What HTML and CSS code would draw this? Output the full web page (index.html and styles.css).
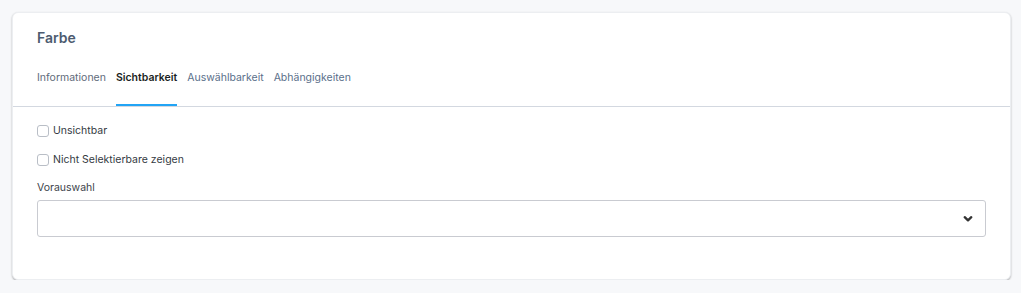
FILE: index.html
```html
<!DOCTYPE html>
<html lang="de">
<head>
<meta charset="utf-8">
<link rel="stylesheet" href="styles.css">
</head>
<body>
<div class="card">
  <div class="card-head">
    <h2 class="title">Farbe</h2>
  </div>
  <nav class="tabs">
    <span class="tab">Informationen</span>
    <span class="tab active">Sichtbarkeit</span>
    <span class="tab link">Auswählbarkeit</span>
    <span class="tab link">Abhängigkeiten</span>
  </nav>
  <div class="body">
    <label class="check"><span class="box"></span><span>Unsichtbar</span></label>
    <label class="check second"><span class="box"></span><span>Nicht Selektierbare zeigen</span></label>
    <div class="field-label">Vorauswahl</div>
    <div class="select">
      <svg class="chev" width="10" height="8" viewBox="0 0 10 8"><path d="M1.7 2.2 L5 5.4 L8.3 2.2" fill="none" stroke="#333" stroke-width="2.3" stroke-linecap="round" stroke-linejoin="round"/></svg>
    </div>
  </div>
</div>
</body>
</html>
```
FILE: styles.css
```css
* { box-sizing: border-box; }
html, body { margin: 0; padding: 0; }
body {
  background: #f7f8fa;
  font-family: Inter, "Noto Sans", sans-serif;
  padding: 12px 10px 0 12px;
}
.card {
  width: 999px;
  height: 268px;
  background: #fff;
  border: 1px solid #eceef1;
  border-radius: 6px;
  box-shadow: 0 1px 2px rgba(0,0,0,0.3);
}
.card-head { padding: 15px 24px 0; }
.title {
  margin: 0;
  font-size: 14px;
  line-height: 20px;
  font-weight: 600;
  color: #4d5b6f;
}
.tabs {
  display: flex;
  gap: 10px;
  margin-top: 22px;
  padding: 0 24px;
  border-bottom: 1px solid #d3d8e0;
}
.tab {
  font-size: 10.5px;
  line-height: 16px;
  padding-bottom: 18px;
  border-bottom: 2px solid transparent;
  color: #5f6b7a;
}
.tab.link { color: #5a6f8a; }
.tab.active {
  color: #1c1f24;
  font-weight: 600;
  border-bottom-color: #22a4f5;
}
.body { padding: 16px 24px 0; }
.check {
  display: flex;
  align-items: center;
  gap: 4px;
  font-size: 10.5px;
  line-height: 16px;
  color: #343a42;
}
.check.second { margin-top: 13px; }
.box {
  width: 12px;
  height: 12px;
  border: 1px solid #b9bec6;
  border-radius: 3px;
  background: #fff;
}
.field-label {
  margin-top: 12px;
  font-size: 10.5px;
  line-height: 16px;
  color: #3d434b;
}
.select {
  margin-top: 4px;
  height: 37px;
  border: 1px solid #c9cbd1;
  border-radius: 3px;
  display: flex;
  align-items: center;
  justify-content: flex-end;
  padding-right: 12px;
}
.chev { display: block; }
```
